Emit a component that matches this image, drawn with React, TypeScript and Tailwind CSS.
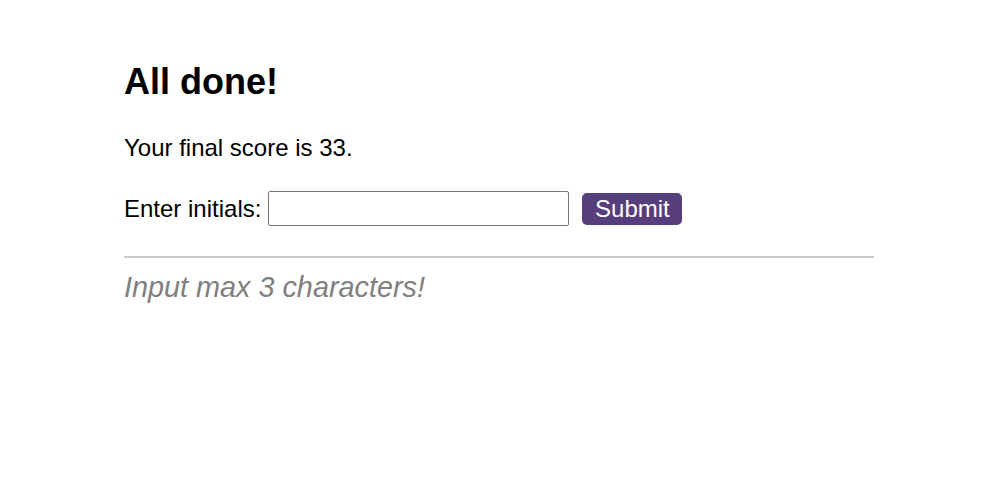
export default function App() {
  return (
    <div className="min-h-screen bg-white font-['Liberation_Sans',Arial,sans-serif] text-black">
      <div className="pl-[124px] pr-[118px] pt-[62px]">
        <h1 className="text-[36px] leading-[40px] font-bold">All done!</h1>
        <p className="mt-[32px] text-[24px] leading-[27px]">Your final score is 33.</p>
        <div className="mt-[30px] flex items-center text-[24px] leading-[27px]">
          <label htmlFor="initials" className="mr-[7px]">Enter initials:</label>
          <input
            id="initials"
            type="text"
            className="box-border h-[35px] w-[301px] border border-[#767676] rounded-[2px] px-1 text-[16px] outline-none"
          />
          <button className="ml-[13px] h-[32px] w-[100px] rounded-[5px] bg-[#563d7c] text-[24px] leading-[27px] text-white">
            Submit
          </button>
        </div>
        <hr className="mt-[30px] border-0 h-[2px] bg-[#cccccc]" />
        <p className="mt-[13px] text-[28.8px] leading-[33px] italic text-[#808080]">Input max 3 characters!</p>
      </div>
    </div>
  );
}
